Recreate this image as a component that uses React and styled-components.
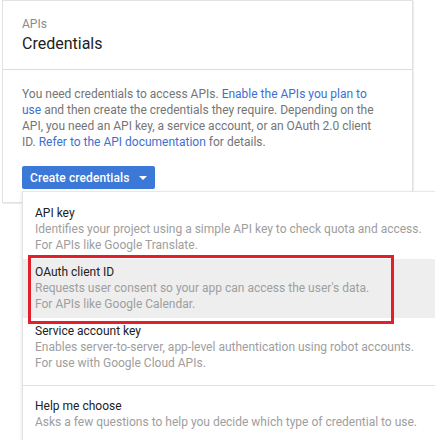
import React from "react";
import styled, { createGlobalStyle } from "styled-components";

const Global = createGlobalStyle`
  html, body { margin: 0; padding: 0; background: #fff; overflow: hidden; }
  body { font-family: Roboto, "Liberation Sans", Arial, sans-serif; -webkit-font-smoothing: antialiased; }
`;

const Page = styled.div`
  width: 435px;
  height: 440px;
  position: relative;
  overflow: hidden;
`;

const Card = styled.section`
  margin-left: 2px;
  width: 409px;
  border: 1px solid #e2e2e2;
  box-shadow: 1px 1px 0 #ececec;
  background: #fff;
`;

const Header = styled.header`
  padding: 15px 20px 13px 19px;
  border-bottom: 1px solid #dcdcdc;
`;

const Crumb = styled.div`
  font-size: 12px;
  line-height: 16px;
  color: #8a8a8a;
`;

const Title = styled.h1`
  margin: 0;
  font-size: 16px;
  line-height: 24px;
  font-weight: 400;
  color: #212121;
`;

const Body = styled.div`
  padding: 16px 28px 13px 19px;
`;

const Para = styled.p`
  margin: 0;
  font-size: 12px;
  line-height: 16px;
  color: #757575;
`;

const Link = styled.a`
  color: #3e6fd0;
  text-decoration: none;
`;

const ButtonWrap = styled.div`
  position: relative;
  margin-top: 16px;
  display: inline-block;
  vertical-align: top;
`;

const Button = styled.button`
  display: flex;
  align-items: center;
  gap: 9px;
  height: 23px;
  padding: 0 8px 0 8px;
  border: 0;
  border-radius: 2px;
  background: #3c78d8;
  color: #fff;
  font-family: inherit;
  font-size: 12px;
  font-weight: 500;
  letter-spacing: 0.1px;
`;

const Caret = styled.span`
  width: 0;
  height: 0;
  border-left: 4px solid transparent;
  border-right: 4px solid transparent;
  border-top: 4px solid #fff;
  margin-top: 1px;
`;

const Menu = styled.ul`
  position: absolute;
  left: 0;
  top: 25px;
  width: 440px;
  margin: 0;
  padding: 8px 0 20px;
  list-style: none;
  background: #fff;
  border-left: 1px solid #e3e3e3;
  border-top: 1px solid #e8e8e8;
  box-shadow: -1px 1px 3px rgba(0, 0, 0, 0.08);
  z-index: 2;
`;

const Item = styled.li`
  position: relative;
  padding: 5px 13px 6px 12px;
  background: ${(p) => (p.$active ? "#eeeeee" : "transparent")};
`;

const ItemTitle = styled.div`
  font-size: 12px;
  line-height: 16px;
  color: #212121;
`;

const ItemDesc = styled.div`
  font-size: 12px;
  line-height: 16px;
  color: #9e9e9e;
`;

const Divider = styled.li`
  height: 1px;
  background: #e0e0e0;
  margin: 8px 0 7px;
`;

const Highlight = styled.div`
  position: absolute;
  left: 5px;
  top: -4px;
  width: 360px;
  height: 63px;
  border: 3px solid #e2202b;
  pointer-events: none;
`;

const items = [
  {
    title: "API key",
    lines: [
      "Identifies your project using a simple API key to check quota and access.",
      "For APIs like Google Translate.",
    ],
  },
  {
    title: "OAuth client ID",
    lines: [
      "Requests user consent so your app can access the user's data.",
      "For APIs like Google Calendar.",
    ],
    active: true,
  },
  {
    title: "Service account key",
    lines: [
      "Enables server-to-server, app-level authentication using robot accounts.",
      "For use with Google Cloud APIs.",
    ],
  },
];

export default function App() {
  return (
    <Page>
      <Global />
      <Card>
        <Header>
          <Crumb>APIs</Crumb>
          <Title>Credentials</Title>
        </Header>
        <Body>
          <Para>
            You need credentials to access APIs.{" "}
            <Link href="#">Enable the APIs you plan to use</Link> and then
            create the credentials they require. Depending on the API, you need
            an API key, a service account, or an OAuth 2.0 client ID.{" "}
            <Link href="#">Refer to the API documentation</Link> for details.
          </Para>
          <ButtonWrap>
            <Button>
              Create credentials
              <Caret />
            </Button>
            <Menu>
              {items.map((it) => (
                <Item key={it.title} $active={it.active}>
                  {it.active && <Highlight />}
                  <ItemTitle>{it.title}</ItemTitle>
                  {it.lines.map((l) => (
                    <ItemDesc key={l}>{l}</ItemDesc>
                  ))}
                </Item>
              ))}
              <Divider />
              <Item>
                <ItemTitle>Help me choose</ItemTitle>
                <ItemDesc>
                  Asks a few questions to help you decide which type of
                  credential to use.
                </ItemDesc>
              </Item>
            </Menu>
          </ButtonWrap>
        </Body>
      </Card>
    </Page>
  );
}
